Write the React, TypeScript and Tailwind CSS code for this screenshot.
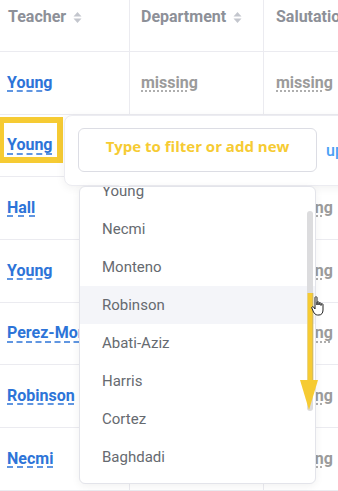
import React from 'react';

const rows = ['Young', 'Young', 'Hall', 'Young', 'Perez-Montes', 'Robinson', 'Necmi'];
const options = ['Young', 'Necmi', 'Monteno', 'Robinson', 'Abati-Aziz', 'Harris', 'Cortez', 'Baghdadi'];

const SortIcon: React.FC = () => (
  <svg width="9" height="13" viewBox="0 0 9 13" className="ml-[7px] inline-block">
    <path d="M4.5 1 L8.5 5.5 L0.5 5.5 Z" fill="#c3c6cd" />
    <path d="M4.5 12 L8.5 7.5 L0.5 7.5 Z" fill="#c3c6cd" />
  </svg>
);

const Missing: React.FC = () => (
  <span className="text-[16px] font-bold text-[#9b9b9b] underline decoration-dotted decoration-[#9b9b9b] underline-offset-[3px]">
    missing
  </span>
);

const App: React.FC = () => {
  return (
    <div className="relative w-[338px] h-[491px] overflow-hidden bg-white font-['Roboto',sans-serif]">
      <div className="grid grid-cols-[130px_134px_1fr]">
        <div className="h-[52px] border-b border-r border-[#ebebf0] pl-[8px] pt-[5px]">
          <span className="text-[16px] font-bold text-[#8d9098] flex items-center">
            Teacher <SortIcon />
          </span>
        </div>
        <div className="h-[52px] border-b border-r border-[#ebebf0] pl-[11px] pt-[5px]">
          <span className="text-[16px] font-bold text-[#8d9098] flex items-center">
            Department <SortIcon />
          </span>
        </div>
        <div className="h-[52px] border-b border-[#ebebf0] pl-[12px] pt-[5px]">
          <span className="text-[16px] font-bold text-[#8d9098] whitespace-nowrap">Salutation</span>
        </div>

        {rows.map((name, i) => (
          <React.Fragment key={i}>
            <div className="h-[62.67px] border-b border-r border-[#ebebf0] pl-[7px] flex items-center overflow-hidden">
              <span className="text-[16px] font-bold text-[#2d74d8] underline decoration-dashed decoration-[#2d74d8] underline-offset-[3px] whitespace-nowrap">
                {name}
              </span>
            </div>
            <div className="h-[62.67px] border-b border-r border-[#ebebf0] pl-[11px] flex items-center">
              <Missing />
            </div>
            <div className="h-[62.67px] border-b border-[#ebebf0] pl-[12px] flex items-center">
              <Missing />
            </div>
          </React.Fragment>
        ))}
      </div>

      {/* highlight around the clicked cell */}
      <div className="absolute left-0 top-[117px] w-[63px] h-[46px] border-[6px] border-l-[4px] border-[#f6cb33]" />

      {/* edit popover */}
      <div className="absolute left-[64px] top-[115px] w-[300px] h-[71px] bg-white rounded-l-lg border border-[#ececf1] shadow-[0_2px_10px_rgba(0,0,0,0.06)] pl-[13px] pt-[12px] flex items-start">
        <div className="w-[239px] h-[44px] shrink-0 border border-[#dcdde4] rounded-md flex justify-center pt-[6px]">
          <span className="text-[15px] font-bold text-[#f6cb33] font-['Open_Sans',sans-serif]">
            Type to filter or add new
          </span>
        </div>
        <span className="ml-[9px] mt-[11px] text-[16px] text-[#4aa0f5] font-medium whitespace-nowrap">update</span>
        <div className="absolute left-[55px] bottom-[-5px] w-[8px] h-[8px] bg-white border-r border-b border-[#ececf1] rotate-45" />
      </div>

      {/* dropdown list */}
      <div className="absolute left-[79px] top-[186px] w-[237px] h-[298px] bg-white border border-[#e3e4ea] rounded-md shadow-[0_2px_8px_rgba(0,0,0,0.06)] overflow-hidden">
        <div className="-mt-[15px]">
          {options.map((o) => (
            <div
              key={o}
              className={`h-[38px] flex items-center pl-[22px] text-[15px] text-[#666a70] ${o === 'Robinson' ? 'bg-[#f4f5f9]' : ''}`}
            >
              {o}
            </div>
          ))}
        </div>
        <div className="absolute right-[2px] top-[24px] w-[6px] h-[200px] rounded-full bg-[#dcdcde]" />
      </div>

      {/* scroll arrow annotation */}
      <svg className="absolute left-[296px] top-[290px]" width="30" height="124" viewBox="0 0 30 124">
        <rect x="11.5" y="3" width="5" height="88" fill="#f6cb33" />
        <rect x="16" y="3" width="1.5" height="88" fill="#c9a52a" opacity="0.5" />
        <path d="M4 90 L22 90 L13 120 Z" fill="#f6cb33" />
      </svg>

      {/* pointer cursor */}
      <svg className="absolute left-[311px] top-[295px]" width="16" height="22" viewBox="0 0 16 22">
        <path
          d="M4 2.5 C4 1.5 6 1.5 6 2.5 L6 10 L6 7.5 C6 6.5 8 6.5 8 7.5 L8 10 L8 8.5 C8 7.5 10 7.5 10 8.5 L10 10.5 L10 9.5 C10 8.5 12 8.5 12 9.5 L12 15 C12 18 10.5 20 8 20 L6.5 20 C4.5 20 3.5 18.5 2.5 17 L0.8 13 C0.4 12 1.8 11.2 2.6 12 L4 14 Z"
          fill="white"
          stroke="#222"
          strokeWidth="1"
          strokeLinejoin="round"
        />
      </svg>
    </div>
  );
};

export default App;
